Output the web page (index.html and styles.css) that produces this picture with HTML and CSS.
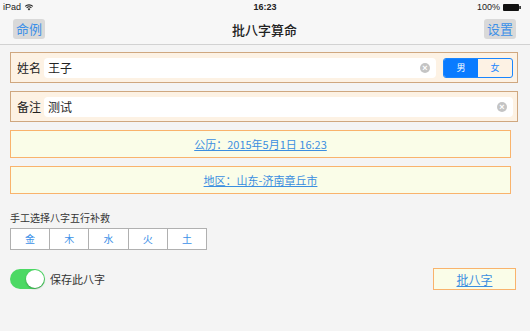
FILE: index.html
```html
<!DOCTYPE html>
<html lang="zh">
<head>
    <meta charset="UTF-8">
    <meta name="viewport" content="width=device-width, initial-scale=1.0">
    <title>批八字算命</title>
    <link rel="stylesheet" href="styles.css">
</head>
<body>
    <div class="status-bar">
        <div class="status-left">
            iPad
            <svg class="wifi" width="10" height="8" viewBox="0 0 10 8">
                <path d="M5 7.5 L3.6 6 A2 2 0 0 1 6.4 6 Z" fill="#222"/>
                <path d="M2.6 4.9 A3.5 3.5 0 0 1 7.4 4.9" stroke="#222" stroke-width="1.1" fill="none"/>
                <path d="M1.2 3.4 A5.5 5.5 0 0 1 8.8 3.4" stroke="#222" stroke-width="1.1" fill="none"/>
            </svg>
        </div>
        <div class="status-time">16:23</div>
        <div class="status-right">
            100%
            <svg width="18" height="7" viewBox="0 0 18 7">
                <rect x="0" y="0" width="16" height="7" rx="1" fill="#111"/>
                <rect x="16.3" y="2" width="1.5" height="3" fill="#111"/>
            </svg>
        </div>
    </div>

    <div class="nav-bar">
        <button class="nav-btn">命例</button>
        <div class="nav-title">批八字算命</div>
        <button class="nav-btn">设置</button>
    </div>

    <div class="content">
        <div class="field-row">
            <span class="field-label">姓名</span>
            <div class="field-input">
                <span>王子</span>
                <span class="clear-icon">×</span>
            </div>
            <div class="gender">
                <span class="gender-item active">男</span>
                <span class="gender-item">女</span>
            </div>
        </div>

        <div class="field-row">
            <span class="field-label">备注</span>
            <div class="field-input">
                <span>测试</span>
                <span class="clear-icon">×</span>
            </div>
        </div>

        <div class="link-btn wide"><a href="#">公历：2015年5月1日 16:23</a></div>
        <div class="link-btn wide"><a href="#">地区：山东-济南章丘市</a></div>

        <div class="section-label">手工选择八字五行补救</div>
        <div class="elements">
            <span>金</span>
            <span>木</span>
            <span>水</span>
            <span>火</span>
            <span>土</span>
        </div>

        <div class="bottom-row">
            <div class="save">
                <span class="switch"><span class="knob"></span></span>
                <span>保存此八字</span>
            </div>
            <div class="link-btn small"><a href="#">批八字</a></div>
        </div>
    </div>
</body>
</html>
```

FILE: styles.css
```css
body {
    margin: 0;
    background: #f4f4f4;
    font-family: "Noto Sans CJK SC", "Liberation Sans", sans-serif;
    color: #222;
}
.status-bar {
    height: 14px;
    display: flex;
    align-items: center;
    justify-content: space-between;
    padding: 0 9px 0 3px;
    font-family: "Liberation Sans", sans-serif;
    font-size: 9px;
    background: #f7f7f7;
    position: relative;
}
.status-left, .status-right {
    display: flex;
    align-items: center;
    gap: 3px;
}
.status-time {
    position: absolute;
    left: 0;
    right: 0;
    text-align: center;
    font-weight: bold;
}
.nav-bar {
    height: 30px;
    display: flex;
    align-items: center;
    justify-content: space-between;
    padding: 0 14px 0 13px;
    background: #f7f7f7;
    border-bottom: 1px solid #d2d2d2;
}
.nav-btn {
    height: 20px;
    padding: 0 3px;
    border: none;
    border-radius: 3px;
    background: #d9d9d9;
    color: #3c90e8;
    font-family: "Noto Sans CJK SC", sans-serif;
    font-size: 13px;
    line-height: 20px;
}
.nav-title {
    font-size: 13px;
    font-weight: 500;
}
.content {
    padding: 7px 12px 0 10px;
}
.field-row {
    height: 29px;
    display: flex;
    align-items: center;
    background: #fdf2e4;
    border: 1px solid #cfa77f;
    padding: 0 4px 0 6px;
    margin-bottom: 8px;
}
.field-label {
    font-size: 12px;
    width: 27px;
}
.field-input {
    flex: 1;
    height: 20px;
    display: flex;
    align-items: center;
    justify-content: space-between;
    background: #fff;
    border-radius: 4px;
    padding: 0 6px 0 4px;
    font-size: 12px;
}
.clear-icon {
    width: 10px;
    height: 10px;
    border-radius: 50%;
    background: #c4c4c4;
    color: #fff;
    font-family: "Liberation Sans", sans-serif;
    font-size: 9px;
    font-weight: bold;
    line-height: 10px;
    text-align: center;
}
.gender {
    display: flex;
    margin-left: 7px;
    border: 1px solid #1a86ff;
    border-radius: 3px;
    overflow: hidden;
}
.gender-item {
    width: 34px;
    height: 18px;
    line-height: 18px;
    text-align: center;
    font-size: 9px;
    color: #1a86ff;
}
.gender-item.active {
    background: #0a7bff;
    color: #fff;
}
.link-btn {
    background: #fafde8;
    border: 1px solid #f9b36c;
    display: flex;
    align-items: center;
    justify-content: center;
    box-sizing: border-box;
}
.link-btn a {
    color: #3b8ee0;
    font-size: 11px;
}
.link-btn.wide {
    height: 28px;
    margin-right: 7px;
    margin-bottom: 8px;
}
.link-btn.small {
    width: 83px;
    height: 22px;
}
.link-btn.small a {
    font-size: 12px;
}
.section-label {
    margin-top: 17px;
    font-size: 10px;
    line-height: 13px;
    color: #333;
}
.elements {
    display: flex;
    width: 197px;
    margin-top: 4px;
    border: 1px solid #b0b0b0;
    background: #fff;
    box-sizing: border-box;
}
.elements span {
    flex: 1;
    height: 20px;
    line-height: 20px;
    text-align: center;
    font-size: 10px;
    color: #3c90e8;
    border-left: 1px solid #b0b0b0;
}
.elements span:first-child {
    border-left: none;
}
.bottom-row {
    display: flex;
    align-items: center;
    justify-content: space-between;
    margin-top: 18px;
    margin-right: 2px;
}
.save {
    display: flex;
    align-items: center;
    gap: 5px;
    font-size: 11px;
    color: #333;
}
.switch {
    width: 35px;
    height: 20px;
    border-radius: 10px;
    background: #4cd964;
    display: flex;
    justify-content: flex-end;
    align-items: center;
    padding-right: 1px;
    box-sizing: border-box;
}
.knob {
    width: 18px;
    height: 18px;
    border-radius: 50%;
    background: #fff;
    box-shadow: 0 1px 2px rgba(0, 0, 0, 0.3);
}
```
